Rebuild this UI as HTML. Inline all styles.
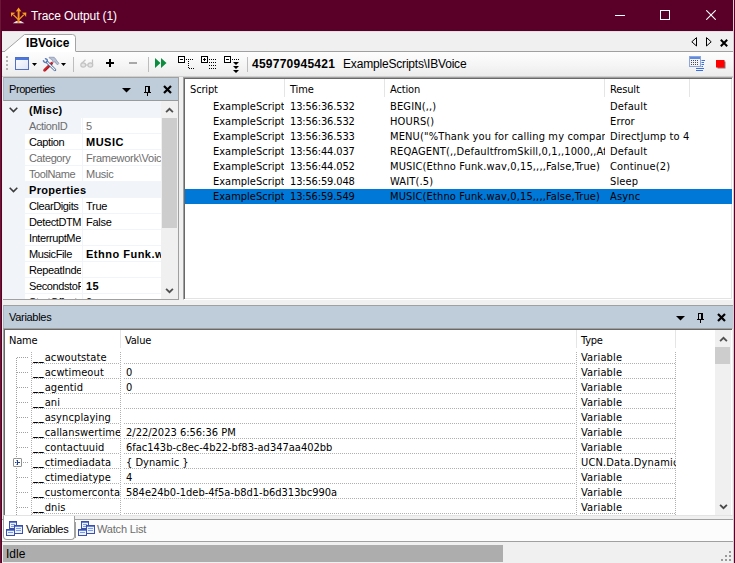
<!DOCTYPE html>
<html lang="en"><head><meta charset="utf-8"><title>Trace Output (1)</title>
<style>
*{box-sizing:border-box;margin:0;padding:0}
html,body{width:735px;height:563px;overflow:hidden;background:#f0f0f0}
body{font-family:"Liberation Sans",sans-serif;font-size:11px;color:#000}
#win{position:absolute;left:0;top:0;width:735px;height:563px;background:#f0f0f0;overflow:hidden}
#win>*{position:absolute}
i{font-style:normal}
/* window frame */
#titlebar{left:0;top:0;width:735px;height:31px;background:#5a0028}
#titlebar .tt{position:absolute;left:31px;top:9px;font-size:12px;line-height:15px;color:#fff;white-space:nowrap;letter-spacing:-0.1px}
#bl{left:0;top:0;width:2px;height:563px;background:#5a0028;border-left:1px solid #6b1635}
#br{left:733px;top:0;width:2px;height:563px;background:linear-gradient(90deg,#dccdd3 50%,#5a0028 50%)}
#titlebar svg{position:absolute}
/* tab strip */
#tabstrip{left:2px;top:31px;width:731px;height:21px;background:#f0f0f0;border-top:1px solid #e2e2e2}
#tabline{left:76px;top:51px;width:657px;height:1px;background:#a0a0a0}
#tabline2{left:2px;top:51px;width:3px;height:1px;background:#a0a0a0}
#tabstrip svg{position:absolute}
#tabstrip .tl{position:absolute;left:24px;top:4px;font-weight:bold;font-size:12px;line-height:14px;white-space:nowrap;letter-spacing:0.05px}
/* toolbar */
#toolbar{left:2px;top:52px;width:731px;height:24px;background:linear-gradient(#fdfdfd,#f6f6f6 50%,#ececec)}
#toolbar>*{position:absolute}
#toolbar .sep{width:1px;background:#bdbdbd;top:5px;height:15px}
#toolbar .tx{top:5px;font-size:12px;line-height:14px;white-space:nowrap}
#tbline{left:2px;top:76px;width:731px;height:1px;background:#d0d0d0}
/* dock headers */
.phead{position:absolute;left:0;top:0;right:0;height:24px;background:#bfcddb;border-top:1px solid #a0a0a0}
.ptitle{position:absolute;left:5px;top:5px;font-size:11px;line-height:13px;white-space:nowrap;letter-spacing:-0.3px}
.pi{position:absolute}
/* properties panel */
#props{left:3px;top:77px;width:176px;height:223px;background:#fff;border-right:1px solid #a0a0a0;border-bottom:1px solid #a0a0a0}
#props .phead{border-bottom:1px solid #9a9a9a;border-left:1px solid #a8b4c0}
.pgrid{position:absolute;left:0;top:24px;width:158px;height:198px;overflow:hidden;background:#f1f5fa;padding-top:1px}
.pr{position:relative;height:16px;border-bottom:1px solid #f1f5fa;white-space:nowrap;background:#fff}
.pr.cat{background:#f1f5fa}
.pr .exp{position:absolute;left:0;top:0;width:22px;height:16px;background:#f1f5fa}
.pr .exp svg{position:absolute;left:6px;top:5px}
.pr .cn{position:absolute;left:26px;top:2px;font-weight:bold;font-size:11px;line-height:13px;letter-spacing:0.3px}
.pr:not(.cat)::before{content:"";position:absolute;left:0;top:0;width:22px;height:16px;background:#f1f5fa}
.pr .pn{position:absolute;left:22px;top:0;width:56px;height:15px;padding:2px 0 0 4px;overflow:hidden;line-height:13px;letter-spacing:-0.4px}
.pr .pv{position:absolute;left:79px;top:0;width:79px;height:15px;padding:2px 0 0 3px;border-left:1px solid #f1f5fa;overflow:hidden;line-height:13px;letter-spacing:-0.25px}
.pr.ro{color:#6d6d6d}
.pr.b .pv{font-weight:bold;letter-spacing:0.5px}
.psb,.vsb{position:absolute;background:#f0f0f0}
.psb{left:158px;top:24px;width:17px;height:198px}
.psb svg,.vsb svg{position:absolute;left:4px}
.psb .up{top:6px}
.psb .dn{bottom:5px}
.psb .thumb{position:absolute;left:1px;top:17px;width:15px;height:110px;background:#cdcdcd}
#props .dd{left:118px;top:10px}
#props .pin{left:140px;top:8px}
#props .cx{left:159px;top:6.5px}
#props .ptitle{letter-spacing:-0.42px}
/* lists */
.lst{font-family:"DejaVu Sans Condensed","DejaVu Sans",sans-serif;font-size:11px}
#trace{left:183px;top:77px;width:550px;height:223px;background:#fff;border:1px solid #a0a0a0;border-right-color:#fff;border-bottom-color:#fff;box-shadow:inset 1px 1px 0 #696969,inset -1px -1px 0 #e3e3e3;overflow:hidden}
#trace .lh{position:relative;height:20px;margin:1px 0 0 1px}
#trace .lh span{position:absolute;top:4px;letter-spacing:-0.15px;line-height:13px;white-space:nowrap}
#trace .lh i{position:absolute;top:0;width:1px;height:18px;background:#e5e5e5}
#trace .lh .c1{left:5px}
#trace .lh .c2{left:105px}
#trace .lh .c3{left:205px}
#trace .lh .c4{left:425px}
#trace .tr{position:relative;height:15px;margin-left:1px;white-space:nowrap}
#trace .tr span{position:absolute;top:1px;line-height:13px;overflow:hidden}
#trace .tr .c1{left:28px;width:71px}
#trace .tr .c2{left:105px;width:96px;letter-spacing:-0.15px}
#trace .tr .c3{left:205px;width:215px;letter-spacing:0.14px}
#trace .tr .c4{left:425px;width:110px;letter-spacing:0.15px}
#trace .tr.sel{background:#0078d7}
#trace .s1{left:99px}#trace .s2{left:199px}#trace .s3{left:419px}#trace .s4{left:504px}
/* variables panel */
#vars{left:3px;top:305px;width:730px;height:211px}
#vars .phead{height:23px;border-left:1px solid #a8b4c0}
#vars .dd{left:672px;top:10px}
#vars .pin{left:693px;top:7px}
#vars .cx{left:713px;top:6.5px}
.vlist{position:absolute;left:0;top:23px;width:730px;height:188px;background:#fff;border:1px solid #a0a0a0;border-right-color:#f0f0f0;border-bottom-color:#e3e3e3;box-shadow:inset 1px 1px 0 #696969;overflow:hidden}
.vh{position:relative;height:20px;margin:1px 0 0 1px}
.vh span{position:absolute;top:4px;letter-spacing:-0.2px;line-height:13px}
.vh i{position:absolute;top:0;width:1px;height:18px;background:#e5e5e5}
.vh .v1{left:4px}.vh .v2{left:120px}.vh .v3{left:576px}
.vh .s1{left:115px}.vh .s2{left:571px}.vh .s3{left:670px}
.vr{position:relative;height:15px;margin-left:1px;white-space:nowrap}
.vr span{position:absolute;top:1px;line-height:13px;overflow:hidden;height:14px}
.vr .v1{left:28px;width:87px;letter-spacing:0.1px}
.vr .us{position:relative;top:-1px;letter-spacing:0.9px;font-weight:bold}
.vr .v2{left:121px;width:449px}
.vr .v3{left:576px;width:95px;letter-spacing:0.15px}
.vr u{position:absolute;top:13px;height:1px;text-decoration:none;background-image:linear-gradient(90deg,#b0b0b0 50%,transparent 50%);background-size:2px 1px}
.vr .u1{left:27px;width:88px}.vr .u2{left:119px;width:452px}.vr .u3{left:575px;width:96px}
.vsb{left:711px;top:1px;width:16px;height:185px}
.vsb .up{top:6px}
.vsb .thumb{position:absolute;left:0;top:17px;width:15px;height:17px;background:#cdcdcd}
.vsb .dn{bottom:5px}
/* tree lines */
.vr .hl{position:absolute;left:12px;top:7px;width:11px;height:1px;background-image:linear-gradient(90deg,#a0a0a0 50%,transparent 50%);background-size:2px 1px}
.vr .hl.sh{left:18px;width:5px}
.vtree{position:absolute;left:12px;top:29px;width:1px;height:158px;background-image:linear-gradient(#a0a0a0 50%,transparent 50%);background-size:1px 2px}
.vr .plus{position:absolute;left:8px;top:3px;width:9px;height:9px;border:1px solid #919191;background:#fff;border-radius:1px}
.vr .plus::before{content:"";position:absolute;left:1px;top:3px;width:5px;height:1px;background:#1c3f9c}
.vr .plus::after{content:"";position:absolute;left:3px;top:1px;width:1px;height:5px;background:#1c3f9c}
.vs{position:absolute;top:23px;width:1px;height:165px;background-image:linear-gradient(#b0b0b0 50%,transparent 50%);background-size:1px 2px}
.vs0{left:27px}.vs1{left:116px}.vs2{left:572px}.vs3{left:671px}
/* bottom tabs */
#btabs{left:2px;top:516px;width:731px;height:26px;background:#fcfcfc;border-bottom:1px solid #a0a0a0}
#btabs>*{position:absolute}
#btabs .bline{left:0;top:3px;width:731px;height:1px;background:#a0a0a0}
#btabs .bpre{left:0;top:0;width:731px;height:3px;background:#f0f0f0}
#btabs .bt1{left:1px;top:0;width:72px;height:24px;background:#fff;border:1px solid #a0a0a0;border-top:0;border-radius:0 0 4px 4px}
#btabs .bl1{left:24px;top:7px;line-height:13px;letter-spacing:-0.3px}
#btabs .bl2{left:95px;top:7px;line-height:13px;color:#6d6d6d;letter-spacing:-0.18px}
#btabs .bsep{left:73px;top:6px;width:1px;height:16px;background:#a0a0a0}
/* status */
#status{left:2px;top:542px;width:731px;height:21px;background:#f0f0f0}
#status .bar{position:absolute;left:1px;top:3px;width:500px;height:17px;background:#adadad}
#status span{position:absolute;left:4px;top:5px;font-size:12px;line-height:14px}
#status svg{position:absolute;right:1px;bottom:1px}

.pr.first .pn{background:#f1f5fa}

</style></head><body>
<div id="win">
<div id="titlebar">
<svg style="left:10px;top:7px" width="17" height="17" viewBox="0 0 17 17"><path d="M2.800 16.300H14.400L10.800 13.900H6.400z" fill="#eadfe4"/><path d="M8.600 15.900V3" stroke="#f59a1c" stroke-width="1.900" fill="none"/><path d="M8.300 12.600L3.400 7.800M8.900 12.600L13.800 7.800" stroke="#f59a1c" stroke-width="1.200" fill="none"/><path d="M8.600 0.400L5.800 4.600L7.600 4.200H9.600L11.400 4.600zM0.900 5.500L5.500 5.700L3.900 6.700L2.300 8.300L1.100 10zM16.300 5.500L11.700 5.700L13.300 6.700L14.900 8.300L16.100 10z" fill="#f9a11e"/><path d="M8 15.900V12.500" stroke="#dd7f10" stroke-width="0.700" fill="none"/></svg>
<span class="tt">Trace Output (1)</span>
<svg style="left:615px;top:15px" width="10" height="1" viewBox="0 0 10 1"><rect width="10" height="1" fill="#fff"/></svg>
<svg style="left:660px;top:10px" width="10" height="10" viewBox="0 0 10 10"><rect x="0.500" y="0.500" width="9" height="9" fill="none" stroke="#fff"/></svg>
<svg style="left:706px;top:10px" width="10" height="10" viewBox="0 0 10 10"><path d="M0.300 0.300l9.400 9.400M9.700 0.300l-9.400 9.400" stroke="#fff" stroke-width="1.100" fill="none"/></svg>
</div>
<div id="bl"></div><div id="br"></div>
<div id="tabstrip">
<svg style="left:0;top:0" width="80" height="21" viewBox="0 0 80 21"><path d="M0 19.500H2.500L22.500 2.500H70.500Q73.500 2.500 73.500 5.500V19.500H80V20H0z" fill="#fff"/><path d="M0 19.500H2.500L22.500 2.500H70.500Q73.500 2.500 73.500 5.500V19.500" fill="none" stroke="#a4a4a4" stroke-width="1"/></svg>
<span class="tl">IBVoice</span>
<svg style="left:689px;top:5px" width="6" height="10" viewBox="0 0 6 10"><path d="M5.500 0.600L0.800 4.800L5.500 9z" fill="none" stroke="#000" stroke-width="1"/></svg>
<svg style="left:704px;top:5px" width="6" height="10" viewBox="0 0 6 10"><path d="M0.500 0.600L5.200 4.800L0.500 9z" fill="none" stroke="#000" stroke-width="1"/></svg>
<svg style="left:718px;top:7px" width="8" height="8" viewBox="0 0 8 8"><path d="M0.800 0.800l6.400 6.400M7.200 0.800l-6.400 6.400" stroke="#000" stroke-width="2" fill="none"/></svg>
</div>
<div id="tabline"></div><div id="tabline2"></div>
<div id="toolbar">
<svg style="left:4px;top:4px" width="2" height="14" viewBox="0 0 2 14" fill="#b4b4b4"><rect y="0" width="2" height="2"/><rect y="4" width="2" height="2"/><rect y="8" width="2" height="2"/><rect y="12" width="2" height="2"/></svg>
<svg style="left:13px;top:5px" width="14" height="13" viewBox="0 0 14 13"><defs><linearGradient id="wg" x1="0" y1="0" x2="1" y2="1"><stop offset="0" stop-color="#fff"/><stop offset="1" stop-color="#dde4f7"/></linearGradient></defs><rect x="0.500" y="0.500" width="13" height="12" fill="url(#wg)" stroke="#5271c4"/><rect x="1" y="1" width="12" height="2" fill="#4a78e0"/></svg>
<svg style="left:30px;top:11px" width="5" height="3" viewBox="0 0 5 3"><path d="M0 0h5L2.500 3z" fill="#000"/></svg>
<svg style="left:40px;top:4px" width="19" height="17" viewBox="0 0 19 17"><path d="M2.500 14.300L9.700 7.300" stroke="#c9232b" stroke-width="2.700" stroke-linecap="round"/><path d="M3.300 14.900L10.300 8" stroke="#8e1018" stroke-width="0.800"/><path d="M7.200 1.200L12.200 1.300Q14.200 3.500 15 5.100L16.900 7.200L15.800 8.700L14 7.600L13.300 5.800L11.100 6.300L10.100 3.700L7.200 2z" fill="#b9c2d6" stroke="#7f8cab" stroke-width="0.700"/><path d="M5.200 6.200L12.900 13.900" stroke="#3f5d94" stroke-width="2.700" stroke-linecap="round"/><path d="M5.400 6.400L12.800 13.800" stroke="#f4f7fc" stroke-width="1.300" stroke-linecap="round" stroke-dasharray="1.200 0.500"/><path d="M2.910 2.760A1.900 1.900 0 1 1 1.560 4.110" fill="none" stroke="#5d7db3" stroke-width="1.500"/></svg>
<svg style="left:59px;top:11px" width="5" height="3" viewBox="0 0 5 3"><path d="M0 0h5L2.500 3z" fill="#000"/></svg>
<div class="sep" style="left:71px"></div>
<svg style="left:78px;top:7px" width="14" height="9" viewBox="0 0 14 9"><path d="M5.500 0.800L1.500 4.500M12.500 0.500V6" stroke="#c3c3c3" stroke-width="1.200" fill="none"/><ellipse cx="3.200" cy="6" rx="2.400" ry="2.200" fill="#e4e4e4" stroke="#c3c3c3" stroke-width="1.200"/><ellipse cx="10.300" cy="6" rx="2.400" ry="2.200" fill="#e4e4e4" stroke="#c3c3c3" stroke-width="1.200"/><path d="M5.600 6h2.300" stroke="#c3c3c3" stroke-width="1.200"/></svg>
<svg style="left:104px;top:7px" width="8" height="8" viewBox="0 0 8 8"><path d="M4 0v8M0 4h8" stroke="#000" stroke-width="2"/></svg>
<svg style="left:127px;top:10px" width="8" height="2" viewBox="0 0 8 2"><rect width="8" height="2" fill="#a8a8a8"/></svg>
<div class="sep" style="left:146px"></div>
<svg style="left:153px;top:6px" width="12" height="10" viewBox="0 0 12 10"><path d="M0 0l5.500 5L0 10zM6 0l5.500 5L6 10z" fill="#0b8c3e"/></svg>
<svg style="left:176px;top:4px" width="16" height="14" viewBox="0 0 16 14"><rect x="0.500" y="0.500" width="6" height="6" fill="#fff" stroke="#000"/><path d="M2 3.500h3" stroke="#000"/><path d="M8 3.500h8M11 12.500h5" stroke="#000" stroke-dasharray="1 1"/><path d="M10.500 5v8" stroke="#000" stroke-dasharray="1 1"/></svg>
<svg style="left:199px;top:4px" width="16" height="14" viewBox="0 0 16 14"><rect x="0.500" y="0.500" width="6" height="6" fill="#fff" stroke="#000"/><path d="M2 3.500h3M3.500 2v3" stroke="#000"/><path d="M8 3.500h8M8 6.500h8M8 9.500h8M8 12.500h8" stroke="#000" stroke-dasharray="1 1"/></svg>
<svg style="left:222px;top:4px" width="16" height="17" viewBox="0 0 16 17"><rect x="0.500" y="0.500" width="6" height="6" fill="#fff" stroke="#000"/><path d="M2 3.500h3" stroke="#000"/><path d="M8 3.500h8" stroke="#000" stroke-dasharray="1 1"/><path d="M9 6h6l-3 3zM9 10h6l-3 3zM9 14h6l-3 3z" fill="#000"/></svg>
<div class="sep" style="left:245px"></div>
<span class="tx" style="left:250px;font-weight:bold;letter-spacing:0.25px">459770945421</span><span class="tx" style="left:341px;letter-spacing:-0.18px">ExampleScripts\IBVoice</span>
<svg style="left:687px;top:4px" width="16" height="15" viewBox="0 0 16 15"><rect x="0.500" y="0.500" width="11" height="10" fill="#f1f3f8" stroke="#8ea6da"/><rect x="1" y="1" width="10" height="2" fill="#5b8be6"/><path d="M2 4.500h8M2 6.500h8M2 8.500h8" stroke="#4a4a4a" stroke-dasharray="1 1"/><path d="M12.500 4.500h3.500M12.500 6.500h2.500M12.500 8.500h2.500M12.500 10.500h1.500M7 12.500h8M7 14.500h7" stroke="#3a6fe0"/></svg>
<svg style="left:714px;top:8px" width="10" height="9" viewBox="0 0 10 9"><rect x="1.500" y="1.500" width="8" height="7" fill="#8f6f6f"/><rect x="0" y="0" width="8.500" height="7.500" fill="#f00"/></svg>
</div>
<div id="tbline"></div>
<div id="props">
<div class="phead"><span class="ptitle">Properties</span><svg class="pi dd" width="9" height="5" viewBox="0 0 9 5"><path d="M0 0h9L4.5 4.5z" fill="#000"/></svg><svg class="pi pin" width="7" height="10" viewBox="0 0 7 10" fill="#000"><rect x="1" y="0" width="5" height="1"/><rect x="1" y="0" width="1" height="6"/><rect x="4" y="0" width="2" height="6"/><rect x="0" y="6" width="7" height="1"/><rect x="3" y="7" width="1" height="3"/></svg><svg class="pi cx" width="9" height="9" viewBox="0 0 9 9"><path d="M1 1l7 7M8 1l-7 7" stroke="#000" stroke-width="2.2" fill="none"/></svg></div>
<div class="pgrid">
<div class="pr cat"><span class="exp"><svg width="9" height="6" viewBox="0 0 9 6"><path d="M0.7 0.8l3.8 3.8l3.8-3.8" stroke="#3c3c3c" stroke-width="1.6" fill="none"/></svg></span><span class="cn">(Misc)</span></div>
<div class="pr ro first"><span class="pn">ActionID</span><span class="pv">5</span></div>
<div class="pr b"><span class="pn">Caption</span><span class="pv">MUSIC</span></div>
<div class="pr ro"><span class="pn">Category</span><span class="pv">Framework\Voice</span></div>
<div class="pr ro"><span class="pn">ToolName</span><span class="pv">Music</span></div>
<div class="pr cat"><span class="exp"><svg width="9" height="6" viewBox="0 0 9 6"><path d="M0.7 0.8l3.8 3.8l3.8-3.8" stroke="#3c3c3c" stroke-width="1.6" fill="none"/></svg></span><span class="cn">Properties</span></div>
<div class="pr n"><span class="pn">ClearDigits</span><span class="pv">True</span></div>
<div class="pr n"><span class="pn">DetectDTMF</span><span class="pv">False</span></div>
<div class="pr n"><span class="pn">InterruptMessage</span><span class="pv"></span></div>
<div class="pr b"><span class="pn">MusicFile</span><span class="pv">Ethno Funk.wav</span></div>
<div class="pr n"><span class="pn">RepeatIndefinitely</span><span class="pv"></span></div>
<div class="pr b"><span class="pn">SecondstoPlay</span><span class="pv">15</span></div>
<div class="pr n"><span class="pn">StartOffset</span><span class="pv">0</span></div>
</div>
<div class="psb"><svg class="up" width="9" height="6" viewBox="0 0 9 6"><path d="M1.1 5.200l3.400-3.400l3.400 3.400" stroke="#505050" stroke-width="1.800" fill="none"/></svg><div class="thumb"></div><svg class="dn" width="9" height="6" viewBox="0 0 9 6"><path d="M1.1 0.800l3.400 3.400l3.400-3.400" stroke="#505050" stroke-width="1.800" fill="none"/></svg></div>
</div>
<div id="trace" class="lst">
<div class="lh"><span class="c1">Script</span><span class="c2">Time</span><span class="c3">Action</span><span class="c4">Result</span><i class="s1"></i><i class="s2"></i><i class="s3"></i><i class="s4"></i></div>
<div class="tr"><span class="c1">ExampleScript</span><span class="c2">13:56:36.532</span><span class="c3">BEGIN(,,)</span><span class="c4">Default</span></div>
<div class="tr"><span class="c1">ExampleScript</span><span class="c2">13:56:36.532</span><span class="c3">HOURS()</span><span class="c4">Error</span></div>
<div class="tr"><span class="c1">ExampleScript</span><span class="c2">13:56:36.533</span><span class="c3">MENU(&quot;%Thank you for calling my company</span><span class="c4">DirectJump to 4</span></div>
<div class="tr"><span class="c1">ExampleScript</span><span class="c2">13:56:44.037</span><span class="c3">REQAGENT(,,DefaultfromSkill,0,1,,1000,,Aft</span><span class="c4">Default</span></div>
<div class="tr"><span class="c1">ExampleScript</span><span class="c2">13:56:44.052</span><span class="c3">MUSIC(Ethno Funk.wav,0,15,,,,False,True)</span><span class="c4">Continue(2)</span></div>
<div class="tr"><span class="c1">ExampleScript</span><span class="c2">13:56:59.048</span><span class="c3">WAIT(.5)</span><span class="c4">Sleep</span></div>
<div class="tr sel"><span class="c1">ExampleScript</span><span class="c2">13:56:59.549</span><span class="c3">MUSIC(Ethno Funk.wav,0,15,,,,False,True)</span><span class="c4">Async</span></div>
</div>
<div id="vars">
<div class="phead"><span class="ptitle">Variables</span><svg class="pi dd" width="9" height="5" viewBox="0 0 9 5"><path d="M0 0h9L4.5 4.5z" fill="#000"/></svg><svg class="pi pin" width="7" height="10" viewBox="0 0 7 10" fill="#000"><rect x="1" y="0" width="5" height="1"/><rect x="1" y="0" width="1" height="6"/><rect x="4" y="0" width="2" height="6"/><rect x="0" y="6" width="7" height="1"/><rect x="3" y="7" width="1" height="3"/></svg><svg class="pi cx" width="9" height="9" viewBox="0 0 9 9"><path d="M1 1l7 7M8 1l-7 7" stroke="#000" stroke-width="2.2" fill="none"/></svg></div>
<div class="vlist lst">
<div class="vh"><span class="v1">Name</span><span class="v2">Value</span><span class="v3">Type</span><i class="s1"></i><i class="s2"></i><i class="s3"></i></div>
<div class="vr"><i class="hl"></i><span class="v1"><span class="us">__</span>acwoutstate</span><span class="v2"></span><span class="v3">Variable</span><u class="u1"></u><u class="u2"></u><u class="u3"></u></div>
<div class="vr"><i class="hl"></i><span class="v1"><span class="us">__</span>acwtimeout</span><span class="v2">0</span><span class="v3">Variable</span><u class="u1"></u><u class="u2"></u><u class="u3"></u></div>
<div class="vr"><i class="hl"></i><span class="v1"><span class="us">__</span>agentid</span><span class="v2">0</span><span class="v3">Variable</span><u class="u1"></u><u class="u2"></u><u class="u3"></u></div>
<div class="vr"><i class="hl"></i><span class="v1"><span class="us">__</span>ani</span><span class="v2"></span><span class="v3">Variable</span><u class="u1"></u><u class="u2"></u><u class="u3"></u></div>
<div class="vr"><i class="hl"></i><span class="v1"><span class="us">__</span>asyncplaying</span><span class="v2"></span><span class="v3">Variable</span><u class="u1"></u><u class="u2"></u><u class="u3"></u></div>
<div class="vr"><i class="hl"></i><span class="v1"><span class="us">__</span>callanswertime</span><span class="v2">2/22/2023 6:56:36 PM</span><span class="v3">Variable</span><u class="u1"></u><u class="u2"></u><u class="u3"></u></div>
<div class="vr"><i class="hl"></i><span class="v1"><span class="us">__</span>contactuuid</span><span class="v2">6fac143b-c8ec-4b22-bf83-ad347aa402bb</span><span class="v3">Variable</span><u class="u1"></u><u class="u2"></u><u class="u3"></u></div>
<div class="vr"><i class="hl sh"></i><b class="plus"></b><span class="v1"><span class="us">__</span>ctimediadata</span><span class="v2">{ Dynamic }</span><span class="v3">UCN.Data.Dynamic</span><u class="u1"></u><u class="u2"></u><u class="u3"></u></div>
<div class="vr"><i class="hl"></i><span class="v1"><span class="us">__</span>ctimediatype</span><span class="v2">4</span><span class="v3">Variable</span><u class="u1"></u><u class="u2"></u><u class="u3"></u></div>
<div class="vr"><i class="hl"></i><span class="v1"><span class="us">__</span>customerconta</span><span class="v2">584e24b0-1deb-4f5a-b8d1-b6d313bc990a</span><span class="v3">Variable</span><u class="u1"></u><u class="u2"></u><u class="u3"></u></div>
<div class="vr"><i class="hl"></i><span class="v1"><span class="us">__</span>dnis</span><span class="v2"></span><span class="v3">Variable</span><u class="u1"></u><u class="u2"></u><u class="u3"></u></div>
<i class="vtree"></i><i class="vs vs0"></i><i class="vs vs1"></i><i class="vs vs2"></i><i class="vs vs3"></i>
<div class="vsb"><svg class="up" width="9" height="6" viewBox="0 0 9 6"><path d="M1.1 5.200l3.400-3.400l3.400 3.400" stroke="#505050" stroke-width="1.800" fill="none"/></svg><div class="thumb"></div><svg class="dn" width="9" height="6" viewBox="0 0 9 6"><path d="M1.1 0.800l3.400 3.400l3.400-3.400" stroke="#484848" stroke-width="1.800" fill="none"/></svg></div>
</div>
</div>
<div id="btabs"><div class="bpre"></div><div class="bline"></div><div class="bt1"></div>
<svg style="left:4px;top:5px" width="17" height="15" viewBox="0 0 17 15"><rect x="3.500" y="0.500" width="7" height="7" fill="#eef2ff" stroke="#3a4fa5"/><path d="M4 1.500h6" stroke="#5f84e8"/><path d="M5 3.500h4M5 5.500h3" stroke="#7a9af0"/><rect x="8.500" y="4.500" width="8" height="8" fill="#eef2ff" stroke="#3a4fa5"/><path d="M9 5.500h7" stroke="#5f84e8"/><path d="M10 7.500h5M10 9.500h5" stroke="#7a9af0"/><rect x="0.500" y="8.500" width="8" height="6" fill="#eef2ff" stroke="#3a4fa5"/><path d="M1 9.500h7" stroke="#5f84e8"/><path d="M2 11.500h5" stroke="#7a9af0"/></svg>
<span class="bl1">Variables</span>
<div class="bsep"></div>
<svg style="left:76px;top:5px" width="17" height="15" viewBox="0 0 17 15"><rect x="3.500" y="0.500" width="7" height="7" fill="#eef2ff" stroke="#3a4fa5"/><path d="M4 1.500h6" stroke="#5f84e8"/><path d="M5 3.500h4M5 5.500h3" stroke="#7a9af0"/><rect x="8.500" y="4.500" width="8" height="8" fill="#eef2ff" stroke="#3a4fa5"/><path d="M9 5.500h7" stroke="#5f84e8"/><path d="M10 7.500h5M10 9.500h5" stroke="#7a9af0"/><rect x="0.500" y="8.500" width="8" height="6" fill="#eef2ff" stroke="#3a4fa5"/><path d="M1 9.500h7" stroke="#5f84e8"/><path d="M2 11.500h5" stroke="#7a9af0"/></svg>
<span class="bl2">Watch List</span>
</div>
<div id="status"><div class="bar"></div><span>Idle</span>
<svg width="12" height="12" viewBox="0 0 12 12" fill="#9a9a9a"><rect x="9" y="1" width="2" height="2"/><rect x="5" y="5" width="2" height="2"/><rect x="9" y="5" width="2" height="2"/><rect x="1" y="9" width="2" height="2"/><rect x="5" y="9" width="2" height="2"/><rect x="9" y="9" width="2" height="2"/></svg>
</div>
</div>
</body></html>
